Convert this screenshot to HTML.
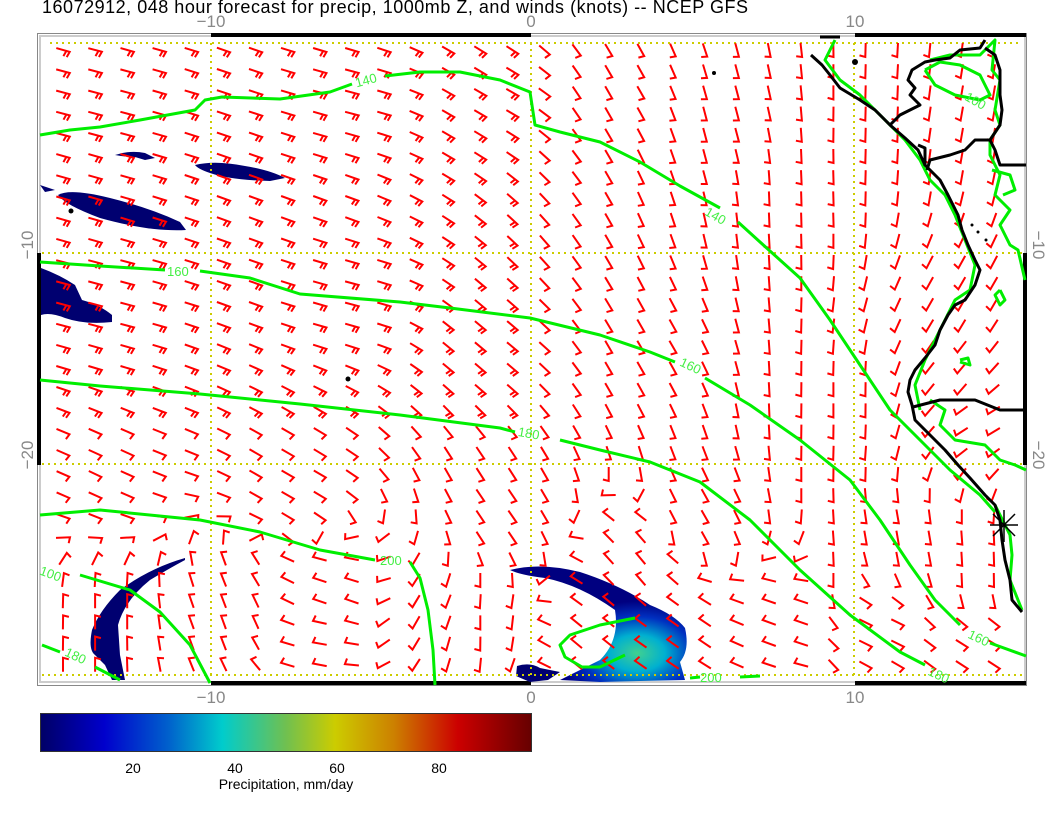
<!DOCTYPE html>
<html><head><meta charset="utf-8">
<style>
html,body{margin:0;padding:0;background:#fff;width:1056px;height:816px;overflow:hidden}
svg{display:block}
text{font-family:"Liberation Sans",sans-serif}
</style></head><body>
<svg id="s" width="1056" height="816" viewBox="0 0 1056 816" xmlns="http://www.w3.org/2000/svg">
<defs>
<linearGradient id="cb" x1="0" x2="1" y1="0" y2="0">
<stop offset="0" stop-color="#000066"/>
<stop offset="0.13" stop-color="#0000cc"/>
<stop offset="0.26" stop-color="#0060cc"/>
<stop offset="0.37" stop-color="#00cccc"/>
<stop offset="0.5" stop-color="#70c050"/>
<stop offset="0.6" stop-color="#cccc00"/>
<stop offset="0.72" stop-color="#cc8000"/>
<stop offset="0.85" stop-color="#cc0000"/>
<stop offset="1" stop-color="#660000"/>
</linearGradient>
<radialGradient id="pg" cx="0.72" cy="0.75" r="0.45">
<stop offset="0" stop-color="#40d090"/>
<stop offset="0.35" stop-color="#00b0d0"/>
<stop offset="0.7" stop-color="#0030c0"/>
<stop offset="1" stop-color="#000080"/>
</radialGradient>
</defs>
<text x="42" y="13" font-size="18" textLength="706" fill="#000">16072912, 048 hour forecast for precip, 1000mb Z, and winds (knots) -- NCEP GFS</text>
<!-- frame -->
<rect x="37.5" y="33.5" width="989" height="652" fill="none" stroke="#888" stroke-width="1"/>
<rect x="40" y="36" width="985" height="646" fill="none" stroke="#ccc" stroke-width="2"/>
<rect x="211" y="33" width="320" height="4" fill="#000"/>
<rect x="855" y="33" width="171" height="4" fill="#000"/>
<rect x="211" y="681" width="320" height="4" fill="#000"/>
<rect x="855" y="681" width="171" height="4" fill="#000"/>
<rect x="37" y="253" width="4" height="212" fill="#000"/>
<rect x="1023" y="253" width="4" height="212" fill="#000"/>
<!-- precip -->
<g fill="#000070">
<path d="M40 185 L55 190 L45 192 Z"/>
<path d="M58 195 Q70 188 110 198 Q150 208 180 222 L186 230 Q150 232 100 218 Q65 205 58 195 Z"/>
<path d="M115 155 Q130 150 145 153 L155 158 L145 160 L135 157 Q125 157 115 155 Z"/>
<path d="M195 165 Q215 160 245 166 Q270 170 285 178 L270 181 Q230 180 210 173 Q198 169 195 165 Z"/>
<path d="M41 268 Q60 275 75 285 L82 300 Q100 305 112 315 L112 322 Q85 325 65 318 Q50 312 41 315 Z"/>
<path d="M185 558 Q150 568 120 590 Q100 610 92 630 Q88 650 95 655 L105 665 L112 680 L125 680 L120 655 L118 625 Q125 600 150 580 Q170 568 185 560 Z"/>
<path d="M517 666 Q530 662 540 668 L560 672 L548 680 L530 682 L516 676 Z"/>
</g>
<path d="M510 570 Q540 562 580 572 Q620 585 650 605 Q675 615 685 628 Q690 650 680 662 L685 680 L600 682 L560 680 Q580 670 600 660 Q620 640 615 610 Q580 585 545 578 Q520 575 510 570 Z" fill="url(#pg)"/>
<!-- grid dotted -->
<g stroke="#cccc00" stroke-width="2" stroke-dasharray="2 4" fill="none">
<line x1="50" y1="43" x2="1020" y2="43"/>
<line x1="42" y1="253" x2="1022" y2="253"/>
<line x1="42" y1="464" x2="1022" y2="464"/>
<line x1="42" y1="675" x2="1022" y2="675"/>
<line x1="211" y1="43" x2="211" y2="675"/>
<line x1="531" y1="43" x2="531" y2="675"/>
<line x1="854" y1="43" x2="854" y2="675"/>
</g>
<g id="barbs" stroke="#ff0000" stroke-width="2" fill="none"></g>
<!-- green contours -->
<g stroke="#00ee00" stroke-width="3" fill="none" stroke-linejoin="round">
<polyline points="40,135 70,130 100,127 140,120 195,110 205,100 222,97 280,99 330,92 352,84"/>
<polyline points="385,76 420,72 460,72 500,80 530,92 535,125 560,132 600,142 640,162 680,186 720,208"/>
<polyline points="738,222 760,242 800,278 830,320 850,350 870,380 890,410 920,440 950,470 980,495 995,512"/>
<polyline points="40,262 100,266 165,270"/>
<polyline points="200,271 250,278 300,294 400,302 450,308 530,318 600,335 650,352 675,362"/>
<polyline points="705,378 750,405 800,440 850,480 880,520 910,565 935,600 960,625"/>
<polyline points="990,643 1026,656"/>
<polyline points="40,380 100,386 200,394 300,404 400,415 500,428 515,432"/>
<polyline points="560,440 600,450 650,462 700,482 750,520 800,570 850,615 900,652 925,665"/>
<polyline points="40,515 100,510 200,520 260,532 320,550 375,560"/>
<polyline points="410,562 420,578 428,610 433,650 435,685"/>
<polyline points="80,575 130,590 160,612 190,645 210,683"/>
<polyline points="42,645 60,652"/>
<polyline points="95,667 120,680"/>
<polyline points="635,618 600,625 570,635 560,645 565,657 582,667 600,667 625,655"/>
<polyline points="690,678 700,677"/>
<polyline points="740,677 760,676"/>
<polyline points="835,40 825,60 840,80 860,95 885,120 905,140 920,160 930,180 945,195 955,215 965,240 975,265 970,290 955,300 940,330 925,360 915,385 920,410"/>
<polyline points="930,60 950,55 980,55 990,45 995,40 992,70 1000,80 995,110 1000,125 990,140 990,155 1000,175 995,195 1010,210 1000,225 1010,245 1018,250 1025,280"/>
<polyline points="925,70 935,85 955,95 980,100 990,95 980,75 960,65 940,62 925,70"/>
<polyline points="992,170 1010,175 1015,190 1003,195"/>
<polyline points="1000,290 1005,300 1000,305 995,295 1000,290"/>
<polyline points="960,360 968,358 970,365 960,362"/>
<polyline points="930,400 945,410 940,425 955,440 985,445 1000,460 1015,465 1026,470"/>
<polyline points="995,505 1010,535 1012,555 1010,580 1022,610"/>
</g>
<g fill="#44ee44" font-size="13">
<text x="355" y="85" transform="rotate(-15 365 80)">140</text>
<text x="705" y="220" transform="rotate(30 715 215)">140</text>
<text x="167" y="276">160</text>
<text x="680" y="370" transform="rotate(25 690 365)">160</text>
<text x="518" y="438" transform="rotate(10 530 433)">180</text>
<text x="380" y="565">200</text>
<text x="40" y="578" transform="rotate(20 50 573)">100</text>
<text x="65" y="660" transform="rotate(25 75 655)">180</text>
<text x="700" y="682">200</text>
<text x="928" y="680" transform="rotate(25 940 675)">180</text>
<text x="968" y="643" transform="rotate(25 980 638)">160</text>
<text x="965" y="105" transform="rotate(30 975 100)">100</text>
</g>
<!-- coastline -->
<g stroke="#000" stroke-width="3" fill="none" stroke-linejoin="round">
<polyline points="811,55 822,65 830,75 840,88 860,100 875,110 890,125 905,138 918,150 925,165 940,180 948,195 958,215 962,230 968,245 975,260 980,270 975,285 965,300 955,305 948,315 940,330 935,345 925,358 915,370 910,380 908,392 912,405 915,420 930,435 945,450 958,465 970,478 985,495 995,505 1000,520 1002,540 1005,560 1010,580 1012,600 1022,612"/>
<polyline points="927,170 930,160 950,155 965,150 975,140 990,140 995,150 1000,165 1026,165"/>
<polyline points="925,166 925,148 918,145"/>
<polyline points="890,125 900,115 910,110 920,105 910,95 915,88 908,80 912,70 925,62 935,60 950,58 960,50 980,48 985,40"/>
<polyline points="985,48 995,55 1000,70 1000,95 1002,110 1000,125 990,140"/>
<polyline points="913,407 940,400 975,400 1000,410 1026,410"/>
<polyline points="820,37 840,37"/>
</g>
<g fill="#000">
<circle cx="714" cy="73" r="2"/><circle cx="855" cy="62" r="3"/><circle cx="71" cy="211" r="2.5"/><circle cx="348" cy="379" r="2.5"/>
<circle cx="972" cy="225" r="1.5"/><circle cx="978" cy="232" r="1.5"/><circle cx="986" cy="240" r="1.5"/>
</g>
<g stroke="#000" stroke-width="1.5">
<line x1="990" y1="525" x2="1018" y2="525"/><line x1="1004" y1="510" x2="1004" y2="542"/>
<line x1="993" y1="514" x2="1015" y2="536"/><line x1="993" y1="536" x2="1015" y2="514"/>
</g>
<!-- axis labels -->
<g fill="#888" font-size="17" text-anchor="middle">
<text x="211" y="27">−10</text><text x="531" y="27">0</text><text x="855" y="27">10</text>
<text x="211" y="703">−10</text><text x="531" y="703">0</text><text x="855" y="703">10</text>
<text transform="translate(33 245) rotate(-90)">−10</text>
<text transform="translate(33 455) rotate(-90)">−20</text>
<text transform="translate(1033 245) rotate(90)">−10</text>
<text transform="translate(1033 455) rotate(90)">−20</text>
</g>
<!-- colorbar -->
<rect x="40.5" y="713.5" width="491" height="38" fill="url(#cb)" stroke="#333" stroke-width="1"/>
<g fill="#000" font-size="14" text-anchor="middle">
<text x="133" y="773">20</text><text x="235" y="773">40</text><text x="337" y="773">60</text><text x="439" y="773">80</text>
<text x="286" y="789">Precipitation, mm/day</text>
</g>
</svg>
<script>
(function(){
var g=document.getElementById('barbs');
var S=[[100,100,15],[350,100,15],[500,100,30],[620,100,60],[720,120,75],[800,200,88],[880,120,92],[960,120,100],[960,300,120],[960,380,130],[100,300,15],[350,300,15],[500,350,40],[650,350,60],[850,400,90],[980,420,150],[100,480,25],[300,480,30],[500,520,55],[700,520,60],[900,540,80],[100,620,270],[230,620,250],[340,600,200],[420,620,120],[480,630,90],[580,640,220],[680,630,215],[780,620,200],[880,630,25],[980,640,30],[640,560,230],[320,640,190],[980,580,90]];
function ang(x,y){var sx=0,sy=0;for(var i=0;i<S.length;i++){var dx=x-S[i][0],dy=y-S[i][1];var w=1/Math.pow(dx*dx+dy*dy+100,1.5);var a=S[i][2]*Math.PI/180;sx+=w*Math.cos(a);sy+=w*Math.sin(a);}return Math.atan2(sy,sx);}
var h='';
for(var y=50;y<684;y+=21.2){for(var x=63;x<1022;x+=32.1){
var a=ang(x,y),c=Math.cos(a),s=Math.sin(a),L=7;
var x1=x-c*L,y1=y-s*L,x2=x+c*L,y2=y+s*L;
var ta=a+Math.PI/2+0.25,tc=Math.cos(ta)*6,ts=Math.sin(ta)*6;
h+='<path d="M'+x1.toFixed(1)+' '+y1.toFixed(1)+'L'+x2.toFixed(1)+' '+y2.toFixed(1)+'l'+tc.toFixed(1)+' '+ts.toFixed(1);
if(y<420&&x<520){var bx=x2-c*3.5,by=y2-s*3.5;h+='M'+bx.toFixed(1)+' '+by.toFixed(1)+'l'+tc.toFixed(1)+' '+ts.toFixed(1);}
h+='"/>';}}
g.innerHTML=h;
})();
</script>
</body></html>
